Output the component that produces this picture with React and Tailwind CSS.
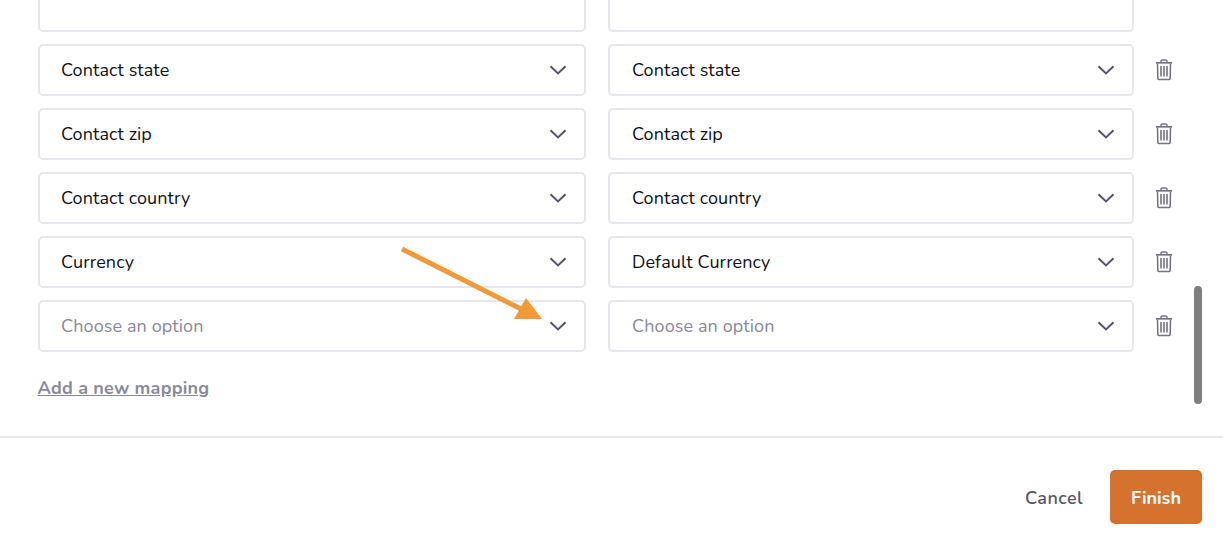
const rows = [
  ["", "", true],
  ["Contact state", "Contact state"],
  ["Contact zip", "Contact zip"],
  ["Contact country", "Contact country"],
  ["Currency", "Default Currency"],
  [null, null],
];

function Chevron() {
  return (
    <svg width="18" height="10" viewBox="0 0 18 10" fill="none" stroke="#565567" strokeWidth="2">
      <path d="M1.5 1.2 L9 8.4 L16.5 1.2" />
    </svg>
  );
}

function Select({ value, className }) {
  const empty = value === null;
  return (
    <div
      className={`flex h-[52px] items-center justify-between rounded-[5px] border-2 border-[#e6e6ec] bg-white pr-[17px] ${className}`}
    >
      <span className={`text-[18px] leading-none tracking-[0.1px] ${empty ? "text-[#8b8a98]" : "text-[#111116]"}`}>
        {empty ? "Choose an option" : value}
      </span>
      {value !== "" && <Chevron />}
    </div>
  );
}

function TrashIcon() {
  return (
    <svg width="18" height="22" viewBox="0 0 18 22" fill="none" stroke="#727181" strokeWidth="1.5">
      <path d="M1 3.8h16" strokeWidth="1.7" />
      <path d="M6 3.6V2.4C6 1.6 6.6 1 7.4 1h3.2c.8 0 1.4.6 1.4 1.4v1.2" />
      <path d="M2.5 4.4l.3 14.8c0 .7.5 1.2 1.2 1.2h10c.7 0 1.2-.5 1.2-1.2l.3-14.8" />
      <path d="M6 7v10.5M9 7v10.5M12 7v10.5" strokeWidth="1.6" />
    </svg>
  );
}

export default function App() {
  return (
    <div className="relative h-[547px] w-[1223px] overflow-hidden bg-white font-['Nunito','Lato','Noto_Sans',sans-serif]">
      <div className="h-[436px] overflow-hidden pl-[38px]">
        <div className="-mt-[20px] flex flex-col items-start gap-3">
          {rows.map(([left, right, hideTrash], i) => (
            <div key={i} className="flex items-center">
              <Select value={left} className="w-[548px] pl-[21px]" />
              <Select value={right} className="ml-[22px] w-[526px] pl-[22px]" />
              {!hideTrash && (
                <div className="ml-[21px]">
                  <TrashIcon />
                </div>
              )}
            </div>
          ))}
          <a className="mt-[12px] -ml-[0.5px] text-[18px] leading-6 font-bold tracking-[0.22px] text-[#8b8a98] underline">
            Add a new mapping
          </a>
        </div>
      </div>

      <div className="h-[2px] bg-[#e6e6ec]" />

      <div className="flex items-center justify-end pt-[32px] pr-[21px]">
        <button className="mr-[27px] pt-[2px] text-[18px] font-semibold tracking-[0.45px] text-[#565567]">Cancel</button>
        <button className="h-[54px] w-[92px] rounded-[5px] bg-[#d5722e] pt-[2px] text-[18px] font-bold text-white">
          Finish
        </button>
      </div>

      <div className="absolute top-[286px] left-[1194px] h-[118px] w-2 rounded-full bg-[#7f7f7f]" />

      <svg className="absolute top-[240px] left-[395px]" width="150" height="85" viewBox="0 0 150 85" fill="none">
        <path d="M7 9 L130 71" stroke="#f39a38" strokeWidth="5" />
        <path d="M131 58 L119 79 L147 79 Z" fill="#f39a38" />
      </svg>
    </div>
  );
}
